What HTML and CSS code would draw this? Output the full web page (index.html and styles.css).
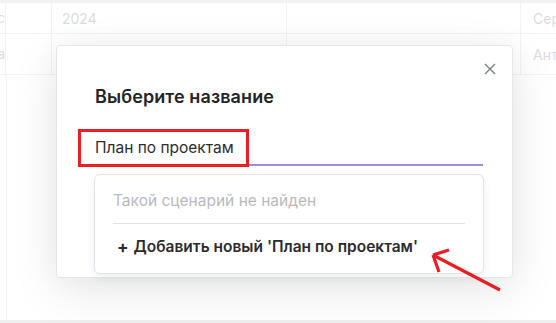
FILE: index.html
```html
<!DOCTYPE html>
<html lang="ru">
<head>
    <meta charset="UTF-8">
    <meta name="viewport" content="width=device-width, initial-scale=1.0">
    <title>Выберите название</title>
    <link rel="stylesheet" href="styles.css">
</head>
<body>
    <div class="screen">
        <!-- Background table -->
        <div class="table">
            <div class="row">
                <div class="cell edge">с</div>
                <div class="cell num"></div>
                <div class="cell wide">2024</div>
                <div class="cell wide"></div>
                <div class="cell last">Сергей</div>
            </div>
            <div class="row">
                <div class="cell edge">а</div>
                <div class="cell num"></div>
                <div class="cell wide"></div>
                <div class="cell wide"></div>
                <div class="cell last">Антон</div>
            </div>
            <div class="filler"></div>
        </div>

        <!-- Modal -->
        <div class="modal">
            <button class="close-btn" aria-label="Закрыть">
                <svg width="12" height="12" viewBox="0 0 12 12"><path d="M1 1L11 11M11 1L1 11" stroke="#7b7f87" stroke-width="1.4" fill="none"/></svg>
            </button>
            <h2 class="modal-title">Выберите название</h2>
            <div class="field">
                <span class="field-value">План по проектам</span>
                <div class="highlight"></div>
            </div>
            <div class="dropdown">
                <div class="dropdown-empty">Такой сценарий не найден</div>
                <div class="dropdown-divider"></div>
                <div class="dropdown-add">
                    <span class="plus">+</span>
                    <span>Добавить новый 'План по проектам'</span>
                </div>
            </div>
        </div>

        <!-- Annotation arrow -->
        <svg class="arrow" width="80" height="50" viewBox="0 0 80 50">
            <path d="M72 42L5 7M5 7L21 2M5 7L11 24" stroke="#ec1c24" stroke-width="3.2" fill="none" stroke-linecap="butt"/>
        </svg>
    </div>
</body>
</html>
```

FILE: styles.css
```css
/* Global Styles */
* {
    margin: 0;
    padding: 0;
    box-sizing: border-box;
    font-family: 'Inter', 'Noto Sans', Arial, sans-serif;
}

body {
    background: #ffffff;
    color: #333;
    width: 556px;
    height: 323px;
    overflow: hidden;
}

.screen {
    position: relative;
    width: 556px;
    height: 323px;
    border-top: 3px solid #f2f2f3;
    border-bottom: 3px solid #efeff0;
}

/* Background table */
.table {
    display: flex;
    flex-direction: column;
    height: 100%;
}

.row {
    display: flex;
    border-bottom: 1px solid #f3f3f4;
    height: 36px;
}

.row:first-child {
    height: 31px;
}

.row:nth-child(2) {
    height: 41px;
}

.cell {
    display: flex;
    align-items: center;
    font-size: 14px;
    color: #dcdcdf;
    border-right: 1px solid #f3f3f4;
    white-space: nowrap;
    overflow: hidden;
}

.cell.edge {
    width: 6px;
    justify-content: flex-end;
    font-size: 13px;
}

.cell.num {
    width: 46px;
}

.cell.wide {
    width: 235px;
    padding-left: 10px;
}

.cell.wide:nth-child(4) {
    width: 234px;
}

.cell.last {
    flex: 1;
    padding-left: 12px;
    border-right: none;
}

.filler {
    flex: 1;
    border-left: 1px solid #f3f3f4;
    margin-left: 6px;
}

/* Modal */
.modal {
    position: absolute;
    left: 56px;
    top: 42px;
    width: 457px;
    height: 233px;
    background: #fff;
    border: 1px solid #e6e7ea;
    border-radius: 4px;
    box-shadow: 0 14px 50px rgba(0, 0, 0, 0.09), 0 0 30px rgba(0, 0, 0, 0.04);
    padding: 39px 29px 0 38px;
}

.close-btn {
    position: absolute;
    top: 17px;
    right: 16px;
    width: 12px;
    height: 12px;
    border: none;
    background: none;
    cursor: pointer;
    display: flex;
}

.modal-title {
    font-size: 18px;
    font-weight: 600;
    color: #222428;
    line-height: 24px;
    letter-spacing: 0.1px;
}

.field {
    position: relative;
    margin-top: 21px;
    height: 36px;
    border-bottom: 2px solid #a38ade;
    padding-top: 7px;
}

.field-value {
    font-size: 15.5px;
    line-height: 20px;
    color: #2b2d31;
}

.highlight {
    position: absolute;
    left: -17px;
    top: -1px;
    width: 171px;
    height: 38px;
    border: 3px solid #ee1c24;
}

.dropdown {
    margin: 8px 0 0 -1px;
    width: 390px;
    height: 100px;
    background: #fff;
    border: 1px solid #e1e3ea;
    border-radius: 6px;
    box-shadow: 0 4px 10px rgba(30, 40, 80, 0.07);
    padding: 16px 18px 0 18px;
}

.dropdown-empty {
    font-size: 15.5px;
    line-height: 20px;
    color: #b9babd;
}

.dropdown-divider {
    height: 1px;
    background: #e3e4e6;
    margin: 12px 0 13px;
}

.dropdown-add {
    display: flex;
    align-items: center;
    gap: 5px;
    font-size: 15.5px;
    line-height: 20px;
    font-weight: 600;
    color: #2a2b2e;
    padding-left: 4px;
}

.plus {
    font-size: 17px;
    font-weight: 700;
}

/* Annotation */
.arrow {
    position: absolute;
    left: 428px;
    top: 245px;
}
```
